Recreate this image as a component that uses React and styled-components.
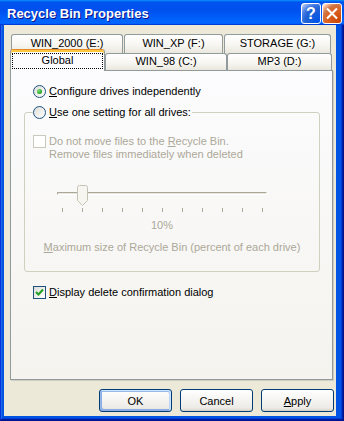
import React from "react";
import styled, { createGlobalStyle, css } from "styled-components";

const GlobalStyle = createGlobalStyle`
  html, body { margin: 0; padding: 0; background: #ffffff; }
  body { font-family: "Liberation Sans", Arial, sans-serif; font-size: 11px; color: #000; }
  * { box-sizing: border-box; }
`;

const Window = styled.div`
  width: 344px;
  height: 421px;
  display: flex;
  flex-direction: column;
  overflow: hidden;
  background: #0054e3;
  box-shadow: inset -1px -1px #00138c, inset 1px 1px #0831d9, inset -2px -2px #001ea0,
    inset 2px 2px #166aee, inset -3px -3px #003bda, inset 3px 3px #0855dd;
`;

const TitleBar = styled.div`
  height: 25px;
  flex: 0 0 25px;
  display: flex;
  align-items: flex-start;
  padding: 0 2px 0 7px;
  background: linear-gradient(180deg, #0997ff, #0053ee 8%, #0050ee 40%, #06f 88%, #06f 93%, #005bff 95%, #003dd7 96%, #003dd7);
`;

const TitleText = styled.div`
  flex: 1;
  margin-top: 6px;
  color: #fff;
  font-family: "Liberation Sans", Arial, sans-serif;
  font-weight: bold;
  font-size: 13px;
  line-height: 15px;
  letter-spacing: 0;
  text-shadow: 1px 1px #0f1089;
`;

const CaptionButtons = styled.div`
  display: flex;
  gap: 1px;
  margin-top: 3px;
`;

const CaptionButton = styled.div`
  width: 20px;
  height: 21px;
  border: 1px solid #fff;
  border-radius: 3px;
  display: flex;
  align-items: center;
  justify-content: center;
  color: #fff;
  font-family: "Liberation Sans", Arial, sans-serif;
  font-weight: bold;
  font-size: 16px;
  ${(p) =>
    p.$kind === "close"
      ? css`
          background: radial-gradient(circle at 90% 90%, #cc4600 0, #dc6527 55%, #cd7546 70%, #ffccb2 90%, #fff 100%);
        `
      : css`
          background: radial-gradient(circle at 90% 90%, #0054e9 0, #2263d5 55%, #4479e4 70%, #a3bbec 90%, #fff 100%);
        `}
`;

const Frame = styled.div`
  flex: 1;
  display: flex;
  padding: 0 8px 5px 4px;
`;

const Client = styled.div`
  flex: 1;
  background: #ece9d8;
  display: flex;
  flex-direction: column;
  padding: 9px 0 0 6px;
`;

const TabStrip = styled.div`
  display: flex;
  flex-direction: column;
`;

const BackRow = styled.div`
  display: flex;
  gap: 1px;
  padding-left: 1px;
  height: 19px;
`;

const FrontRow = styled.div`
  display: flex;
  height: 17px;
  align-items: flex-end;
`;

const Tab = styled.div`
  position: relative;
  width: ${(p) => p.$w}px;
  height: ${(p) => (p.$back ? 19 : 17)}px;
  flex: 0 0 auto;
  border: 1px solid #919b9c;
  border-bottom: none;
  border-radius: 3px 3px 0 0;
  background: linear-gradient(180deg, #ffffff 0%, #f7f6f2 55%, #e9e7dd 100%);
  display: flex;
  justify-content: center;
  align-items: flex-start;
  padding-top: ${(p) => (p.$back ? 2 : 1)}px;
  line-height: 13px;
  white-space: nowrap;
  ${(p) =>
    p.$selected &&
    css`
      z-index: 2;
      height: 22px;
      margin-bottom: -1px;
      margin-top: -4px;
      background: #fcfcfe;
      border-top: 1px solid #e68b2c;
      box-shadow: inset 0 2px #ffc73c;
      padding-top: 3px;
      justify-content: flex-start;
    `}
`;

const FocusRect = styled.div`
  margin-left: 1px;
  width: 91px;
  height: 16px;
  border: 1px dotted #000;
  text-align: center;
  line-height: 13px;
`;

const Panel = styled.div`
  width: 323px;
  height: 310px;
  border: 1px solid #919b9c;
  background: linear-gradient(180deg, #fcfcfe 0%, #f4f3ee 100%);
  box-shadow: 1px 1px 0 #d0cec4;
  display: flex;
  flex-direction: column;
  align-items: flex-start;
  padding: 14px 0 0 13px;
`;

const OptionRow = styled.label`
  display: flex;
  align-items: ${(p) => (p.$top ? "flex-start" : "center")};
  gap: 3px;
  margin-left: ${(p) => (p.$indent ? 9 : 0)}px;
  margin-top: ${(p) => p.$mt || 0}px;
  line-height: 13px;
  color: ${(p) => (p.$disabled ? "#aca899" : "#000")};
`;

const Radio = styled.span`
  width: 13px;
  height: 13px;
  flex: 0 0 13px;
  border-radius: 50%;
  border: 1px solid #1d5281;
  background: linear-gradient(135deg, #dcdcd7, #fff);
  display: flex;
  align-items: center;
  justify-content: center;
  &::after {
    content: "";
    display: ${(p) => (p.$checked ? "block" : "none")};
    width: 5px;
    height: 5px;
    border-radius: 50%;
    background: radial-gradient(circle at 35% 35%, #7fe07c, #21a121 70%, #1a8a1a);
  }
`;

const Check = styled.span`
  width: 13px;
  height: 13px;
  flex: 0 0 13px;
  border: 1px solid ${(p) => (p.$disabled ? "#cac8bb" : "#1c5180")};
  background: ${(p) => (p.$disabled ? "#fff" : "linear-gradient(135deg, #dcdcd7, #fff)")};
  display: flex;
  align-items: center;
  justify-content: center;
`;

const Key = styled.span`
  text-decoration: underline;
  text-underline-offset: 1px;
`;

const GroupBox = styled.fieldset`
  width: 296px;
  margin: 8px 0 0 0;
  padding: 0 8px 17px 8px;
  border: 1px solid #d0d0bf;
  border-radius: 3px;
  display: flex;
  flex-direction: column;
  align-items: flex-start;
`;

const Legend = styled.legend`
  padding: 0 1px 0 0;
  margin: 0;
`;

const SliderBlock = styled.div`
  margin: 24px 0 0 24px;
  width: 210px;
  display: flex;
  flex-direction: column;
`;

const TrackArea = styled.div`
  position: relative;
  height: 20px;
  display: flex;
  align-items: flex-start;
`;

const Track = styled.div`
  margin-top: 7px;
  width: 210px;
  height: 3px;
  border-radius: 1px;
  border-top: 1px solid #aca899;
  border-left: 1px solid #aca899;
  border-bottom: 1px solid #ffffff;
  border-right: 1px solid #ffffff;
  background: #e8e6dc;
`;

const Thumb = styled.svg`
  position: absolute;
  top: 0;
`;

const Ticks = styled.div`
  display: flex;
  justify-content: space-between;
  padding: 0 4px 0 5px;
  margin-top: 3px;
  height: 4px;
`;

const TickMark = styled.span`
  width: 1px;
  height: 4px;
  background: #aca899;
`;

const Percent = styled.div`
  margin-top: 7px;
  text-align: center;
  line-height: 13px;
  color: #aca899;
`;

const Caption = styled.div`
  margin-top: 9px;
  align-self: stretch;
  text-align: center;
  line-height: 13px;
  color: #aca899;
`;

const ButtonRow = styled.div`
  display: flex;
  justify-content: flex-end;
  gap: 8px;
  margin-top: 9px;
  padding-right: 2px;
`;

const Button = styled.button`
  width: 73px;
  height: 23px;
  padding: 0;
  border: 1px solid #003c74;
  border-radius: 3px;
  font-family: "Liberation Sans", Arial, sans-serif;
  font-size: 11px;
  color: #000;
  background: linear-gradient(180deg, #fff, #ecebe6 86%, #d6d0c5);
  ${(p) =>
    p.$default &&
    css`
      box-shadow: inset -1px 1px #cee7ff, inset 1px 2px #98b8ea, inset -2px 2px #bcd4f6,
        inset 1px -1px #89ade4, inset 2px -2px #89ade4;
    `}
`;

const backTabs = [
  { label: "WIN_2000 (E:)", w: 112 },
  { label: "WIN_XP (F:)", w: 99 },
  { label: "STORAGE (G:)", w: 107 },
];

const frontTabs = [
  { label: "WIN_98 (C:)", w: 122 },
  { label: "MP3 (D:)", w: 105 },
];

const sliderValue = 1; // tick index
const tickCount = 11;

export default function App() {
  const thumbLeft = 5 + sliderValue * 20 - 5;
  return (
    <>
      <GlobalStyle />
      <Window>
        <TitleBar>
          <TitleText>Recycle Bin Properties</TitleText>
          <CaptionButtons>
            <CaptionButton $kind="help">?</CaptionButton>
            <CaptionButton $kind="close">
              <svg width="19" height="19" viewBox="0 0 19 19">
                <path d="M5 5 L14 14 M14 5 L5 14" stroke="#fff" strokeWidth="2.2" strokeLinecap="square" />
              </svg>
            </CaptionButton>
          </CaptionButtons>
        </TitleBar>
        <Frame>
          <Client>
            <TabStrip>
              <BackRow>
                {backTabs.map((t) => (
                  <Tab key={t.label} $w={t.w} $back>
                    {t.label}
                  </Tab>
                ))}
              </BackRow>
              <FrontRow>
                <Tab $w={95} $selected>
                  <FocusRect>Global</FocusRect>
                </Tab>
                {frontTabs.map((t) => (
                  <Tab key={t.label} $w={t.w}>
                    {t.label}
                  </Tab>
                ))}
              </FrontRow>
            </TabStrip>
            <Panel>
              <OptionRow $indent>
                <Radio $checked />
                <span>
                  <Key>C</Key>onfigure drives independently
                </span>
              </OptionRow>
              <GroupBox>
                <Legend>
                  <OptionRow>
                    <Radio />
                    <span>
                      <Key>U</Key>se one setting for all drives:
                    </span>
                  </OptionRow>
                </Legend>
                <OptionRow $top $disabled $mt={16}>
                  <Check $disabled />
                  <span>
                    Do not move files to the <Key>R</Key>ecycle Bin.
                    <br />
                    Remove files immediately when deleted
                  </span>
                </OptionRow>
                <SliderBlock>
                  <TrackArea>
                    <Track />
                    <Thumb width="11" height="21" viewBox="0 0 11 21" style={{ left: thumbLeft }}>
                      <path
                        d="M2.5 .5 H8.5 Q10.5 .5 10.5 2.5 V15.5 L5.5 20.5 L.5 15.5 V2.5 Q.5 .5 2.5 .5 Z"
                        fill="#f6f5f0"
                        stroke="#c4c2b4"
                      />
                    </Thumb>
                  </TrackArea>
                  <Ticks>
                    {Array.from({ length: tickCount }).map((_, i) => (
                      <TickMark key={i} />
                    ))}
                  </Ticks>
                  <Percent>10%</Percent>
                </SliderBlock>
                <Caption>
                  <Key>M</Key>aximum size of Recycle Bin (percent of each drive)
                </Caption>
              </GroupBox>
              <OptionRow $indent $mt={14}>
                <Check>
                  <svg width="11" height="11" viewBox="0 0 11 11">
                    <path d="M2 5 L4.5 7.5 L9 2.5" fill="none" stroke="#21a121" strokeWidth="2" />
                  </svg>
                </Check>
                <span>
                  <Key>D</Key>isplay delete confirmation dialog
                </span>
              </OptionRow>
            </Panel>
            <ButtonRow>
              <Button $default>OK</Button>
              <Button>Cancel</Button>
              <Button>
                <Key>A</Key>pply
              </Button>
            </ButtonRow>
          </Client>
        </Frame>
      </Window>
    </>
  );
}
